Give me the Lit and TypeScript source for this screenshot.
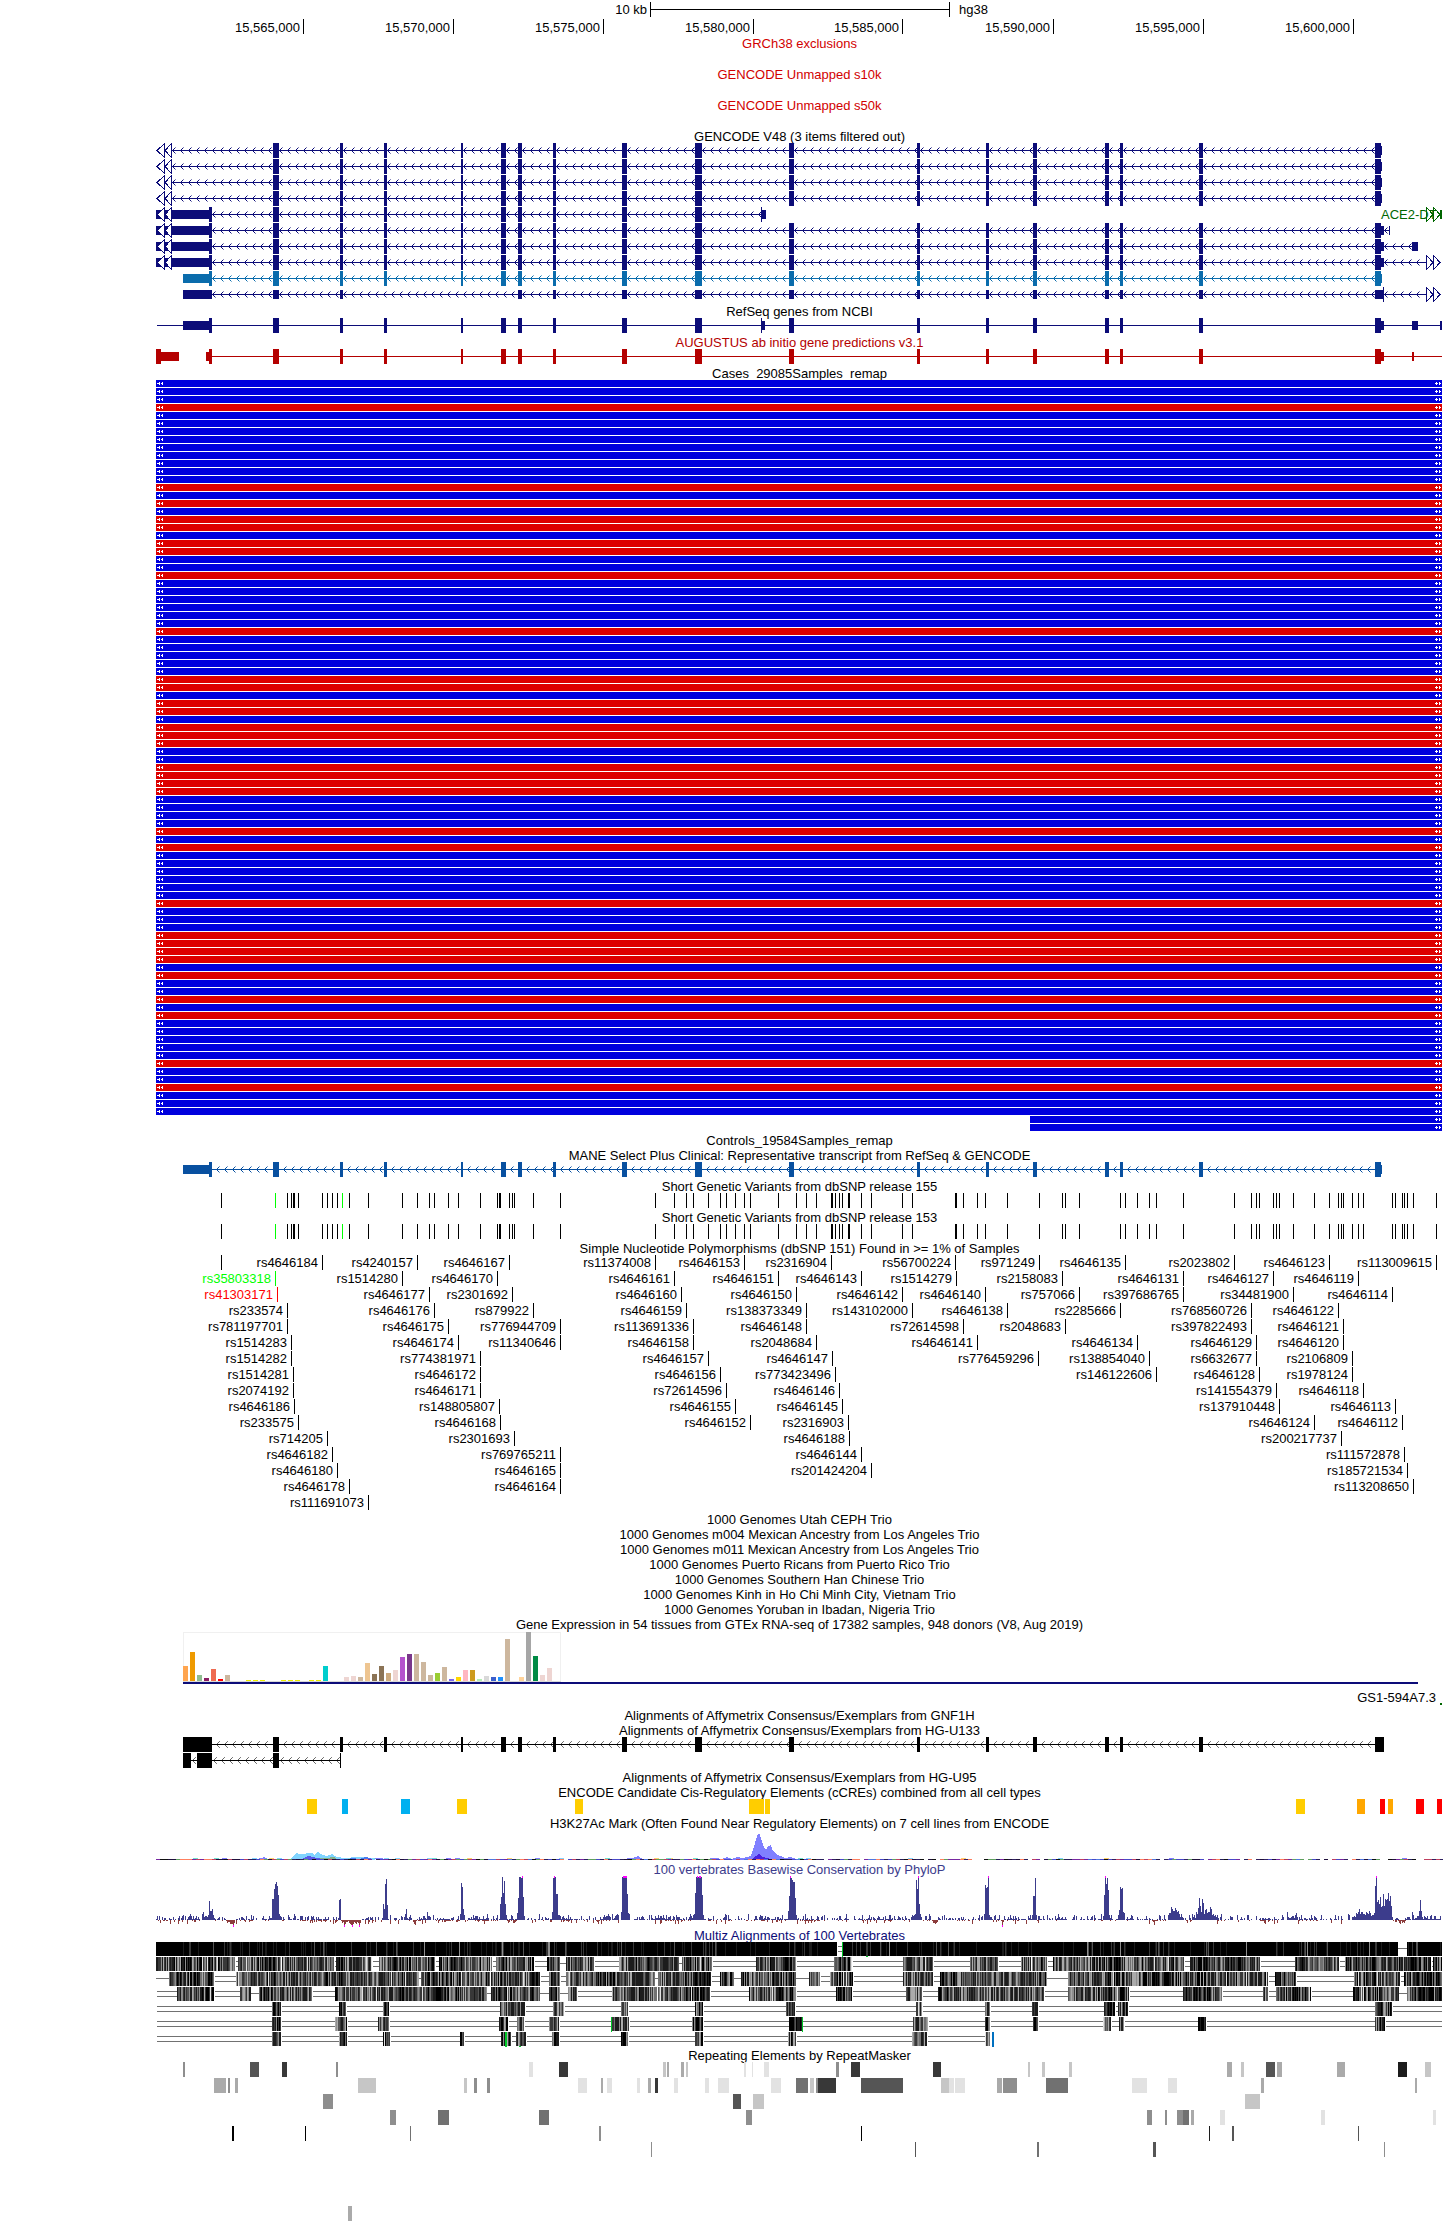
import { LitElement, html, svg, css, nothing } from "lit";
import { customElement, property } from "lit/decorators.js";

const W = 1287;
const UNIT = 2.4123;

/* Feature positions are kept in panel units; each half of the locus has its own origin. */
const L = (u: number) => Math.round(u / UNIT - 6);
const R = (u: number) => Math.round(u / UNIT + 637);

type Span = [number, number];
type Box = [number, number, string];

const spansL = (a: number[][]): Span[] => a.map(([s, e]) => [L(s), Math.max(L(e), L(s) + 1)]);
const spansR = (a: number[][]): Span[] => a.map(([s, e]) => [R(s), Math.max(R(e), R(s) + 1)]);

/* Repeatable pseudo-random source for the dense signal tracks. */
const noise = (i: number, seed: number) => {
  let h = Math.imul(i + 1, 374761393) ^ Math.imul(seed + 7, 668265263);
  h = Math.imul(h ^ (h >>> 13), 1274126177);
  h ^= h >>> 16;
  return (h >>> 0) / 4294967296;
};

const NAVY = "#0c0c78";
const TEAL = "#0a6cac";
const MANE = "#0850a0";
const MAROON = "#b40000";

const exonsLeft = spansL([
  [297, 311], [458, 466], [564, 572], [750, 755], [847, 859], [888, 897],
  [972, 979], [1139, 1151], [1315, 1332], [1541, 1554],
]);
const exonsRight = spansR([
  [299, 306], [466, 473], [579, 589], [753, 762], [789, 796], [979, 989],
]);
const START: Span = [L(142), L(150)];
const FINAL: Span = [R(1404), R(1418)];
const body = [...exonsLeft, ...exonsRight];

interface Gene {
  color: string;
  thick: Span[];
  thin: Span[];
  from?: number;
  to?: number;
  gap?: Span;
  arrows?: number;
  arrowTone?: number;
  headLeft?: boolean;
  headRight?: boolean;
}

const rect = (s: number, e: number, y: number, h: number) => `M${s} ${y}h${e - s}v${h}h${s - e}z`;

const chevrons = (g: Gene, top: number) => {
  const solid: string[] = [];
  const soft: string[] = [];
  if (g.arrows === undefined) return { solid: "", soft: "" };
  const all = [...g.thick, ...g.thin].sort((a, b) => a[0] - b[0]);
  let pos = g.from ?? all[0][0];
  if (g.headLeft && all[0][0] > 20) pos = 16;
  const stops: Span[] = [...all, [g.to ?? all[all.length - 1][1], W]];
  for (const [s, e] of stops) {
    for (let x = pos + g.arrows; x + 2 < s; x += 8) {
      solid.push(rect(x + 1, x + 2, top + 6, 3), rect(x + 2, x + 3, top + 5, 1), rect(x + 2, x + 3, top + 9, 1));
      soft.push(rect(x + 3, x + 4, top + 4, 1), rect(x + 3, x + 4, top + 10, 1));
    }
    pos = Math.max(pos, e);
  }
  return { solid: solid.join(""), soft: soft.join("") };
};

const drawGene = (g: Gene, row: number) => {
  const top = row * 16;
  const ends = [...g.thick, ...g.thin];
  const from = g.from ?? Math.min(...ends.map((s) => s[0]));
  const to = g.to ?? Math.max(...ends.map((s) => s[1]));
  const line = g.gap
    ? rect(from, g.gap[0], top + 7, 1) + rect(g.gap[1], to, top + 7, 1)
    : rect(from, to, top + 7, 1);
  const c = chevrons(g, top);
  const d = line + g.thick.map(([s, e]) => rect(s, e, top, 15)).join("") + g.thin.map(([s, e]) => rect(s, e, top + 3, 9)).join("");
  const heads: unknown[] = [];
  const tri = (tip: number, base: number) =>
    svg`<path d="M${tip} ${top + 7.5}L${base + 0.5} ${top + 0.5}V${top + 14.5}Z" fill="#fff" stroke=${g.color}></path>`;
  if (g.headLeft) heads.push(tri(1, 8), tri(9, 15));
  if (g.headRight) heads.push(tri(R(1528) + 7, R(1528)), tri(R(1545) + 7, R(1545)));
  return svg`<g fill=${g.color}><path d=${d}></path><path d=${c.solid} opacity=${g.arrowTone ?? 1}></path><path d=${c.soft} opacity="0.5"></path>${heads}</g>`;
};

const tail: Span = [FINAL[1], R(1421)];
const longTail: Span = [FINAL[1], R(1426)];
const full = (extra: Partial<Gene>): Gene => ({
  color: NAVY, thick: [...body, FINAL], thin: [tail], from: 2, arrows: 0, headLeft: true, ...extra,
});
const withUtr = (extra: Partial<Gene>): Gene =>
  full({ from: 0, thick: [START, ...body, FINAL], thin: [[0, START[0]], longTail], ...extra });

const gencode: Gene[] = [
  full({}), full({}), full({}), full({}),
  withUtr({ thick: [START, ...exonsLeft.slice(0, 9), [L(1474), L(1474) + 1]], thin: [[0, START[0]], [L(1474), L(1486)]] }),
  withUtr({ to: R(1440), thin: [[0, START[0]], longTail, [R(1438), R(1438) + 1]] }),
  withUtr({ thin: [[0, START[0]], longTail, [R(1493), R(1508)]] }),
  withUtr({ to: R(1528), headRight: true }),
  withUtr({ color: TEAL, from: L(80), thin: [[L(80), START[0]], tail], headLeft: false }),
  {
    color: NAVY, arrows: 0, from: L(80), to: R(1528), headRight: true,
    thick: [[R(1424), R(1424) + 1]],
    thin: [[L(80), L(150)], ...body.filter((_, i) => i < 2 || i > 4), [FINAL[0], R(1424)]],
  },
];

const aceDt: Gene = { color: "#006600", thick: [], thin: [[R(1561), R(1566)]], headRight: true };

const refseq: Gene[] = [{
  color: NAVY, from: L(17), to: R(1566),
  thick: [START, ...body, FINAL, [L(1474), L(1474) + 1]],
  thin: [[L(80), START[0]], [L(1474), L(1484)], longTail, [R(1493), R(1508)], [R(1561), R(1566)]],
}];

const augustus: Gene[] = [{
  color: MAROON, from: 0, to: R(1566), gap: [L(70), L(135)],
  thick: [[0, L(27)], START, ...body, FINAL],
  thin: [[0, L(70)], [L(135), START[0]], longTail, [R(1494), R(1497)]],
}];

const mane: Gene[] = [{
  color: MANE, arrows: 4,
  thick: [START, ...body, FINAL], thin: [[L(80), START[0]], tail],
}];

const affy: Gene[] = [
  { color: "#000", arrows: 4, arrowTone: 0.6, thin: [], thick: [[L(80), L(150)], ...body, [R(1404), R(1426)]] },
  { color: "#000", arrows: 1, arrowTone: 0.6, thin: [], thick: [[L(80), L(99)], [L(113), L(150)], exonsLeft[0], [L(458), L(458) + 1]] },
];

/* Case samples: 94 rows, minus-effect rows are red. */
const SAMPLE_ROWS = 94;
const redRows = new Set([
  3, 13, 15, 17, 18, 20, 21, 24, 31, 37, 38, 40, 41, 43, 44, 45, 48, 49, 50, 51,
  56, 58, 65, 69, 70, 71, 72, 74, 77, 79, 85, 88,
]);

const snpTicks = [
  ...[172, 331, 341, 344, 348, 356, 416, 426, 440, 452, 481, 527, 609, 645, 672, 686, 720, 742, 795,
    838, 841, 845, 865, 874, 879, 925, 990, 1219, 1263, 1294, 1311, 1345, 1376, 1390, 1410, 1434, 1448, 1514].map(L),
  ...[8, 32, 56, 91, 93, 102, 112, 117, 132, 136, 164, 189, 262, 288, 390, 392, 411, 445, 464, 517, 594,
    648, 655, 689, 790, 802, 831, 858, 875, 942, 1065, 1104, 1116, 1118, 1123, 1159, 1164, 1173, 1207, 1258,
    1294, 1314, 1323, 1326, 1349, 1364, 1374, 1444, 1451, 1470, 1475, 1480, 1495, 1552].map(R),
];
const codingTicks = [302, 462].map(L);

const snpRows: [string, string][] = [
  [":172 4646184:416 4240157:645 4646167:865 11374008:1219 4646153:1434", "2316904:91 56700224:390 971249:594 4646135:802 2023802:1065 4646123:1294 113009615:1552"],
  ["35803318:302:#00ff00 1514280:609 4646170:838 4646161:1263 4646151:1514", "4646143:165 1514279:392 2158083:648 4646131:942 4646127:1159 4646119:1364"],
  ["41303171:307:#ff0000 4646177:672 2301692:874 4646160:1280 4646150:1559", "4646142:262 4646140:464 757066:689 397686765:942 34481900:1207 4646114:1444"],
  ["233574:331 4646176:686 879922:925 4646159:1294", "138373349:32 143102000:288 4646138:517 2285666:790 768560726:1104 4646122:1314"],
  ["781197701:331 4646175:720 776944709:988 113691336:1311", "4646148:32 72614598:411 2048683:655 397822493:1104 4646121:1326"],
  ["1514283:341 4646174:742 11340646:988 4646158:1311", "2048684:56 4646141:445 4646134:831 4646129:1116 4646120:1326"],
  ["1514282:341 774381971:795 4646157:1345", "4646147:93 776459296:590 138854040:858 6632677:1118 2106809:1349"],
  ["1514281:344 4646172:795 4646156:1376", "773423496:102 146122606:875 4646128:1123 1978124:1349"],
  ["2074192:344 4646171:795 72614596:1390", "4646146:112 141554379:1164 4646118:1374"],
  ["4646186:348 148805807:841 4646155:1410", "4646145:117 137910448:1173 4646113:1451"],
  ["233575:356 4646168:845 4646152:1448", "2316903:132 4646124:1258 4646112:1470"],
  ["714205:426 2301693:879", "4646188:136 200217737:1323"],
  ["4646182:440 769765211:988", "4646144:163 111572878:1475"],
  ["4646180:452 4646165:990", "201424204:189 185721534:1480"],
  ["4646178:481 4646164:990", "113208650:1495"],
  ["111691073:527", ""],
];
const parseSnps = (text: string, at: (u: number) => number) =>
  text.split(" ").filter(Boolean).map((t) => {
    const [id, u, color] = t.split(":");
    return { label: id ? `rs${id}` : "", x: at(Number(u)), color: color ?? "#000" };
  });

const TAN = "#cdb79e";
const PINK = "#eed5d2";
/* GTEx tissues: slot, bar height, colour. */
const tissues: [number, number, string][] = [
  [0, 15, "#ffa54f"], [1, 29, "#ee9a00"], [2, 6, "#8fbc8f"], [3, 3, "#8b1c62"], [4, 12, "#ee6a50"],
  [5, 2, "#ff0000"], [6, 6, TAN], [9, 1, "#eeee00"], [10, 1, "#eeee00"], [11, 1, "#eeee00"],
  [14, 1, "#eeee00"], [15, 1, "#eeee00"], [16, 1, "#eeee00"], [18, 1, "#eeee00"], [19, 1, "#eeee00"],
  [20, 15, "#00cdcd"], [23, 4, PINK], [24, 5, PINK], [25, 4, TAN], [26, 18, "#eec591"],
  [27, 7, "#8b7355"], [28, 15, "#8b7355"], [29, 8, "#cdaa7d"], [30, 11, PINK], [31, 24, "#b452cd"],
  [32, 27, "#7a378b"], [33, 27, TAN], [34, 19, TAN], [35, 6, TAN], [36, 8, "#9acd32"],
  [37, 14, TAN], [38, 2, "#7a67ee"], [39, 4, "#ffd700"], [40, 11, "#ffb6c1"], [41, 11, "#cd9b1d"],
  [42, 2, "#b4eeb4"], [43, 5, "#d9d9d9"], [44, 4, "#3a5fcd"], [45, 4, "#1e90ff"], [46, 42, TAN],
  [48, 4, "#ffd39b"], [49, 49, "#a6a6a6"], [50, 25, "#008b45"], [51, 6, PINK], [52, 13, PINK],
];

const ENH = "#ffcd00", CTCF = "#00b0f0", PROX = "#ffa700", PROM = "#ff0000";
const ccres: Box[] = [
  [L(379), L(403), ENH], [L(463), L(478), CTCF], [L(605), L(627), CTCF], [L(741), L(765), ENH],
  [L(1025), L(1045), ENH], [L(1445), L(1481), ENH], [L(1484), L(1496), ENH],
  [R(1213), R(1235), ENH], [R(1361), R(1380), PROX], [R(1416), R(1428), PROM],
  [R(1435), R(1447), PROX], [R(1503), R(1522), PROM], [R(1554), R(1566), PROM],
];

/* H3K27Ac layers as position/height pairs. */
const area = (pts: number[][], at: (u: number) => number) =>
  `M${at(pts[0][0])} 30` + pts.map(([u, h]) => `L${at(u)} ${30 - h}`).join("") + `L${at(pts[pts.length - 1][0])} 30Z`;
const k27: [string, string][] = [
  ["#80d4ff", area([[338, 1], [346, 4], [352, 7], [362, 6], [390, 7], [396, 5], [401, 7], [406, 8], [412, 6], [425, 4], [440, 6], [450, 3], [470, 2], [500, 3], [535, 2], [542, 1]], L)],
  ["#5a5ae6", area([[365, 1], [372, 2], [382, 4], [392, 3], [400, 2], [425, 2], [430, 1]], L)],
  ["#7fb08a", area([[405, 1], [412, 2], [425, 2], [445, 3], [452, 1]], L)],
  ["#4878ee", area([[475, 1], [490, 2], [505, 1], [520, 3], [535, 1]], L)],
  ["#8080ff", area([[258, 1], [268, 2], [275, 3], [284, 1]], L)],
  ["#8080ff", area([[1146, 1], [1155, 2], [1165, 2], [1176, 4], [1185, 2], [1190, 1]], L)],
  ["#8080ff", area([[1340, 1], [1365, 2], [1380, 1], [1393, 3], [1402, 1], [1415, 3], [1430, 2], [1450, 4], [1458, 13], [1464, 24], [1468, 27], [1474, 22], [1480, 12], [1485, 10], [1491, 14], [1497, 15], [1504, 9], [1512, 5], [1522, 4], [1532, 2], [1545, 3], [1560, 1]], L)],
  ["#4a20e0", area([[1452, 1], [1462, 4], [1468, 6], [1475, 4], [1486, 2], [1500, 1]], L)],
];
const baseTones = ["#20103c", "#302060", "#101010", "#4848c8", "#c04060", "#60a060", "#7828a0", "#28205c", "#ff8060", "#5078e0"];
const bumpTones = ["#8080ff", "#ffd070", "#70e0d0", "#80d4ff"];
const k27Line = Array.from({ length: Math.ceil(W / 4) }, (_, i) => i)
  .filter((i) => noise(i, 3) > (i > 160 ? 0.12 : 0.03))
  .map((i) => ({ x: i * 4, c: baseTones[Math.floor(noise(i, 4) * baseTones.length)] }));
const k27Bumps = Array.from({ length: 40 }, (_, i) => ({
  x: Math.floor(noise(i, 5) * (i < 28 ? 620 : W)),
  c: bumpTones[i % 4],
}));

/* PhyloP peaks: left edge followed by one height per pixel column; 44 is the clipped maximum. */
const peaks: [number, number[]][] = [
  [46, [6, 8, 3, 4, 4, 3, 5, 19, 9, 9, 11, 5]],
  [114, [2, 2, 21, 21, 31, 36, 38, 34, 25, 6, 4, 3]],
  [182, [2, 20, 21, 31, 19, 9, 2]],
  [226, [2, 16, 11, 36, 41, 15, 1]],
  [248, [3, 6, 11, 2]],
  [271, [8, 4, 4]],
  [304, [6, 37, 33, 11, 5]],
  [344, [16, 23, 43, 27, 39, 16, 5]],
  [361, [7, 22, 43, 43, 42, 44, 23, 4]],
  [396, [8, 42, 44, 43, 26, 26, 5]],
  [465, [8, 43, 44, 44, 44, 44, 26, 7]],
  [538, [6, 27, 43, 44, 43, 44, 44, 43, 25, 5]],
  [632, [9, 24, 44, 42, 40, 38, 38, 22, 5]],
  [755, [3, 5, 4, 5, 6, 40, 31, 44, 16, 6, 3]],
  [828, [6, 35, 32, 33, 44, 5, 3]],
  [876, [5, 24, 24, 42, 5]],
  [947, [4, 25, 44, 36, 42, 30, 5]],
  [962, [5, 10, 33, 31, 32, 8, 7]],
  [1012, [5, 7, 7, 13, 11, 9, 9, 12, 10, 8, 9, 6, 3, 6]],
  [1036, [6, 3, 5, 2, 8, 6, 12, 22, 14, 8, 21, 17, 6, 10, 11, 7, 8, 8, 13, 11, 5, 6, 4, 5]],
  [1131, [8, 3, 2, 2, 3, 4, 4, 2, 5, 7, 3]],
  [1198, [4, 3, 7, 6, 8, 11, 6, 8, 8, 6, 6, 5, 8, 7, 6, 9, 7, 4, 5]],
  [1218, [7, 34, 44, 18, 20, 16, 23, 13, 14, 26, 14, 21, 20, 21, 27, 19, 24, 14, 3]],
  [1256, [8, 5, 1, 2, 2, 4, 4, 9, 20, 9, 3, 1]],
];
const dips: [number, number[]][] = [
  [70, [1, 3, 2, 2, 4, 4, 4, 7, 3]],
  [185, [1, 3, 2, 7, 4, 2, 2, 1, 3, 4, 5, 7, 4, 2, 3, 4, 2, 3, 7, 3]],
  [257, [2, 4, 5, 1]],
  [440, [1, 2, 4, 1]],
  [776, [1, 3, 3, 4, 3, 2]],
  [845, [1, 7, 2]],
  [997, [2, 5, 1]],
  [1243, [3, 4, 1, 3, 2, 3]],
];
const phylop = (() => {
  const up = new Array<number>(W).fill(0);
  const down = new Array<number>(W).fill(0);
  for (let x = 0; x < 1286; x++) {
    const dense = x < 300 ? 0.62 : noise(Math.floor(x / 26), 11) * 0.5 + 0.4;
    if (noise(x, 12) < dense) up[x] = 1 + Math.floor(noise(x, 13) ** 2 * 5.4);
    const sink = noise(Math.floor(x / 16), 14);
    if (noise(x, 15) < sink * 0.55) down[x] = 1 + Math.floor(noise(x, 16) ** 3 * 4);
  }
  for (const [s, hs] of peaks) hs.forEach((h, i) => { up[s + i] = h; down[s + i] = 0; });
  for (const [s, hs] of dips) hs.forEach((h, i) => { down[s + i] = h; up[s + i] = 0; });
  let pos = "", neg = "", clip = "";
  for (let x = 0; x < W; x++) {
    if (up[x]) pos += rect(x, x + 1, 44 - up[x], up[x]);
    if (down[x]) neg += rect(x, x + 1, 44, down[x]);
    if (up[x] === 44) clip += rect(x, x + 1, 0, 2);
    if (down[x] === 7) clip += rect(x, x + 1, 49, 2);
  }
  return { pos, neg, clip };
})();

/* Multiz rows: aligned blocks, plus the blocks after which the gap is a single line. */
const multiz: { l: number[][]; r: number[][]; single: number[]; end?: number; start?: number }[] = [
  { l: [[14, 1559]], r: [[0, 106], [117, 1460], [1481, 1566]], single: [R(1460)] },
  {
    l: [[14, 204], [212, 316], [318, 444], [449, 536], [552, 688], [697, 825], [835, 926], [958, 990], [1004, 1071], [1131, 1275], [1283, 1356], [1462, 1559]],
    r: [[0, 8], [99, 142], [265, 338], [427, 495], [550, 573], [577, 613], [627, 943], [958, 1127], [1211, 1316], [1332, 1540], [1545, 1566]],
    single: [L(990), L(1275)],
  },
  {
    l: [[46, 155], [207, 262], [263, 649], [654, 819], [822, 941], [963, 988], [1004, 1219], [1225, 1353], [1375, 1408], [1426, 1559]],
    r: [[0, 8], [39, 64], [89, 144], [265, 338], [355, 613], [663, 1146], [1163, 1213], [1353, 1464], [1474, 1566]],
    single: [0, L(1408), R(8), R(613), L(649), L(1219)],
  },
  {
    l: [[65, 155], [217, 244], [263, 391], [446, 813], [823, 941], [963, 988], [1008, 1031], [1114, 1222], [1225, 1351], [1445, 1559]],
    r: [[0, 8], [104, 142], [273, 311], [350, 605], [663, 811], [941, 1034], [1134, 1146], [1165, 1250], [1352, 1463], [1481, 1566]],
    single: [L(244), L(813), L(941), L(988), R(1463)],
  },
  {
    l: [[294, 316], [456, 472], [562, 577], [844, 905], [972, 998], [1136, 1154], [1315, 1334], [1534, 1556]],
    r: [[0, 6], [297, 312], [463, 476], [577, 591], [750, 776], [784, 808], [1404, 1446]], single: [],
  },
  {
    l: [[294, 315], [446, 475], [550, 577], [842, 864], [885, 901], [963, 986], [1114, 1156], [1307, 1334], [1541, 1556]],
    r: [[0, 22], [289, 326], [463, 475], [579, 592], [748, 766], [786, 799], [977, 996], [1404, 1427]], single: [],
  },
  {
    l: [[294, 316], [456, 475], [562, 578], [748, 757], [847, 872], [883, 906], [970, 986], [1136, 1154], [1315, 1334], [1539, 1556]],
    r: [[0, 8], [287, 323], [463, 476]], single: [], end: R(478),
  },
];
const shades = ["#000", "#1c1c1c", "#383838", "#555", "#717171", "#8e8e8e", "#aaa", "#e2e2e2"];
const multizArt = (() => {
  const tones = shades.map(() => "");
  let links = "";
  multiz.forEach((row, r) => {
    const top = r * 15;
    const blocks = [...spansL(row.l), ...spansR(row.r)];
    let pos = 0;
    const end = row.end ?? 1286;
    for (const [s, e] of [...blocks, [end, end] as Span]) {
      if (s > pos + 1) {
        links += row.single.includes(pos)
          ? rect(pos, s, top + 6, 1)
          : rect(pos + 1, s, top + 4, 1) + rect(pos + 1, s, top + 9, 1);
      }
      for (let x = s; x < e; x++) {
        const n = noise(x, 40 + r);
        let t: number;
        if (r === 0) t = n < 0.84 ? 0 : n < 0.92 ? 1 : n < 0.97 ? 2 : n < 0.985 ? 3 : 5;
        else {
          const drift = noise(Math.floor(x / 17), 60 + (r < 4 ? 0 : r)) * 0.5;
          const v = n * n * 0.8 + drift * 0.5;
          t = n > 0.985 ? 7 : Math.min(6, Math.floor(v * 8));
        }
        tones[t] += rect(x, x + 1, top, 14);
      }
      pos = e;
    }
  });
  return { tones, links };
})();

const repeats: Record<number, [string, string]> = {
  0: ["80-84-5 241-263-3 318-330-2 449-454-5 914-924-8 987-1008-2 1238-1245-7 1247-1252-6 1281-1288-6 1293-1298-7 1433-1438-8 1452-1455-8 1481-1493-8",
    "104-111-5 140-162-2 338-357-2 567-572-7 601-608-7 666-673-7 1047-1059-6 1081-1088-7 1141-1163-3 1168-1180-6 1312-1332-6 1459-1481-1 1525-1539-7"],
  1: ["154-183-6 188-193-5 205-212-6 502-545-7 757-765-7 782-789-5 813-820-5 1032-1054-8 1088-1093-6 1102-1114-8 1175-1182-8 1201-1209-6 1218-1225-2 1264-1274-8 1339-1348-8 1370-1397-8 1498-1522-8",
    "7-36-4 41-51-7 55-60-5 60-104-2 164-265-3 357-376-7 376-388-8 391-415-8 492-504-6 507-540-5 610-663-4 818-854-8 905-926-8 1129-1136-6 1500-1505-6"],
  2: ["417-441-5 1406-1426-3 1455-1481-7", "1090-1127-7"],
  3: ["579-593-5 695-721-4 938-963-4 1438-1452-5", "854-866-5 897-902-5 926-941-5 941-955-4 960-967-6 1030-1042-8 1274-1283-8 1544-1551-8"],
  4: ["198-203-0 374-376-0 627-630-4 1083-1088-5", "164-166-0 1004-1006-1 1059-1064-3 1363-1365-3"],
  5: ["1209-1211-5", "294-297-3 589-593-4 868-876-3 1426-1428-5"],
  9: ["478-487-6", ""],
};
const repeatShades = ["#000", "#1c1c1c", "#383838", "#555", "#717171", "#8e8e8e", "#aaa", "#c6c6c6", "#e2e2e2"];

const canvas = (height: number, content: unknown) => html`
  <svg class="art" viewBox="0 0 ${W} ${height}" height=${height} preserveAspectRatio="none" aria-hidden="true">${content}</svg>`;
const before = (x: number) => `right:${((W - x) / W) * 100}%`;
const after = (x: number) => `left:${(x / W) * 100}%`;
const fill = (s: number, e: number, y: number, h: number, c: string) =>
  svg`<path d=${rect(s, Math.max(e, s + 1), y, h)} fill=${c}></path>`;

const base = css`
  :host { display: block; }
  * { box-sizing: border-box; }
  .art { display: block; width: 100%; shape-rendering: crispEdges; }
  .canvas { position: relative; }
  .label { position: absolute; line-height: 16px; white-space: nowrap; }
`;

@customElement("genome-track")
class GenomeTrack extends LitElement {
  static styles = [base, css`
    .title {
      margin: 0;
      font-size: 13px;
      font-weight: 400;
      line-height: 15px;
      padding-top: 1px;
      height: 15px;
      text-align: center;
      white-space: nowrap;
    }
    .red { color: #d20000; }
    .maroon { color: #b40000; }
    .slate { color: #3c3c8c; }
    .navy { color: #0c0c78; }
  `];
  @property() heading = "";
  @property() tone = "";
  render() {
    return html`<section><h2 class="title ${this.tone}">${this.heading}</h2><slot></slot></section>`;
  }
}

@customElement("app-root")
class AppRoot extends LitElement {
  static styles = [base, css`
    :host {
      background: #fff;
      color: #000;
      font-family: "Liberation Sans", Arial, Helvetica, sans-serif;
      font-size: 13px;
    }
    .browser { padding-left: 156px; overflow: hidden; }
    .scale { top: 2px; }
    .position { top: 20px; }
    .empty { height: 16px; }
    .lane { position: relative; height: 16px; }
    .mark { position: absolute; top: 0; width: 1px; height: 15px; }
    .gene-name { top: 64px; color: #006600; }
    .neighbor { top: 59px; }
  `];

  private ruler() {
    const ticks = [
      ...[[368, 15565], [730, 15570], [1092, 15575], [1454, 15580]].map(([u, v]) => [L(u), v]),
      ...[[264, 15585], [628, 15590], [990, 15595], [1352, 15600]].map(([u, v]) => [R(u), v]),
    ];
    const a = L(1205), b = R(377);
    const d = rect(a, b, 9, 1) + rect(a, a + 1, 2, 15) + rect(b, b + 1, 2, 15) +
      ticks.map(([x]) => rect(x, x + 1, 19, 15)).join("");
    return html`<div class="canvas">
      ${canvas(35, svg`<path d=${d}></path>`)}
      <span class="label scale" style=${before(a - 3)}>10 kb</span>
      <span class="label scale" style=${after(b + 10)}>hg38</span>
      ${ticks.map(([x, v]) => html`<span class="label position" style=${before(x - 3)}>${(v * 1000).toLocaleString("en-US")}</span>`)}
    </div>`;
  }

  private genes(list: Gene[]) {
    return canvas(list.length * 16, list.map(drawGene));
  }

  private samples() {
    const rows = Array.from({ length: SAMPLE_ROWS }, (_, i) => {
      const y = i * 8;
      const from = i < 92 ? 0 : R(572);
      const left = i < 92
        ? rect(1, 4, y + 3, 1) + rect(3, 4, y + 2, 3) + rect(5, 7, y + 3, 1) + rect(6, 7, y + 2, 3)
        : "";
      const right = rect(1279, 1282, y + 3, 1) + rect(1280, 1281, y + 2, 3) + rect(1283, 1285, y + 3, 1) + rect(1283, 1284, y + 2, 3);
      return svg`${fill(from, 1286, y, 7, redRows.has(i) ? "#dd0000" : "#0000dd")}<path d=${left + right} fill="#fff"></path>`;
    });
    return canvas(SAMPLE_ROWS * 8, rows);
  }

  private variants() {
    const d = (xs: number[]) => xs.map((x) => rect(x, x + 1, 0, 15)).join("");
    return canvas(16, svg`<path d=${d(snpTicks)}></path><path d=${d(codingTicks)} fill="#00ff00"></path>`);
  }

  private commonSnps() {
    return snpRows.map(([l, r]) => html`<div class="lane">
      ${[...parseSnps(l, L), ...parseSnps(r, R)].map((s) => html`
        <span class="mark" style="${after(s.x)};background:${s.color}"></span>
        ${s.label ? html`<span class="label" style="${before(s.x - 4)};color:${s.color}">${s.label}</span>` : nothing}`)}
    </div>`);
  }

  private expression() {
    const x0 = L(80), x1 = L(990);
    return html`<div class="canvas">
      ${canvas(76, svg`
        <path d="M${x0 + 0.5} 50.5V1.5H${x1 + 0.5}V50.5" fill="none" stroke="#f0f0f0"></path>
        ${fill(x0, x1 + 1, 50, 1, "#d9d9d9")}
        ${tissues.map(([i, h, c]) => fill(x0 + i * 7, x0 + i * 7 + 5, 50 - h, h, c))}
        ${fill(x0, R(1508), 51, 2, NAVY)}
        ${fill(R(1561), R(1566), 72, 2, "#006600")}`)}
      <span class="label neighbor" style=${before(R(1551))}>GS1-594A7.3</span>
    </div>`;
  }

  private acetylation() {
    return canvas(31, svg`
      ${k27Bumps.map((b) => fill(b.x, b.x + 5, 28, 1, b.c))}
      ${k27.map(([c, d]) => svg`<path d=${d} fill=${c}></path>`)}
      ${k27Line.map((s) => fill(s.x, s.x + 4, 29, 1, s.c))}`);
  }

  private conservation() {
    return canvas(51, svg`
      <path d=${phylop.pos} fill="#3c3c8c"></path>
      <path d=${phylop.neg} fill="#8c3c3c"></path>
      <path d=${phylop.clip} fill="#ff00ff"></path>`);
  }

  private alignments() {
    const green = rect(R(117), R(117) + 1, 0, 15) + rect(R(175), R(175) + 2, 14, 1) +
      rect(L(1112), L(1112) + 1, 75, 15) + rect(R(22), R(22) + 1, 75, 15) +
      rect(L(857), L(857) + 2, 90, 15) + rect(L(890), L(890) + 2, 104, 1);
    return canvas(105, svg`
      <path d=${multizArt.links} fill="#717171"></path>
      ${multizArt.tones.map((d, i) => svg`<path d=${d} fill=${shades[i]}></path>`)}
      <path d=${green} fill="#00c828"></path>
      ${fill(R(480), R(485), 90, 15, "#0070c0")}`);
  }

  private repeatMasker() {
    const boxes = (text: string, at: (u: number) => number, row: number) =>
      text.split(" ").filter(Boolean).map((t) => {
        const [s, e, tone] = t.split("-").map(Number);
        return fill(at(s), at(e), row * 16, 15, repeatShades[tone]);
      });
    return canvas(160, Object.entries(repeats).map(([row, [l, r]]) => [boxes(l, L, +row), boxes(r, R, +row)]));
  }

  render() {
    const track = (heading: string, content: unknown = nothing, tone = "") =>
      html`<genome-track heading=${heading} tone=${tone}>${content}</genome-track>`;
    const blank = html`<div class="empty"></div>`;
    return html`<main class="browser">
      ${this.ruler()}
      ${track("GRCh38 exclusions", blank, "red")}
      ${track("GENCODE Unmapped s10k", blank, "red")}
      ${track("GENCODE Unmapped s50k", blank, "red")}
      ${track("GENCODE V48 (3 items filtered out)", html`<div class="canvas">
        ${canvas(160, svg`${gencode.map(drawGene)}${drawGene(aceDt, 4)}`)}
        <span class="label gene-name" style=${after(R(1418))}>ACE2-DT</span>
      </div>`)}
      ${track("RefSeq genes from NCBI", this.genes(refseq))}
      ${track("AUGUSTUS ab initio gene predictions v3.1", this.genes(augustus), "maroon")}
      ${track("Cases_29085Samples_remap", this.samples())}
      ${track("Controls_19584Samples_remap")}
      ${track("MANE Select Plus Clinical: Representative transcript from RefSeq & GENCODE", this.genes(mane))}
      ${track("Short Genetic Variants from dbSNP release 155", this.variants())}
      ${track("Short Genetic Variants from dbSNP release 153", this.variants())}
      ${track("Simple Nucleotide Polymorphisms (dbSNP 151) Found in >= 1% of Samples", this.commonSnps())}
      ${["Utah CEPH Trio", "m004 Mexican Ancestry from Los Angeles Trio", "m011 Mexican Ancestry from Los Angeles Trio",
        "Puerto Ricans from Puerto Rico Trio", "Southern Han Chinese Trio", "Kinh in Ho Chi Minh City, Vietnam Trio",
        "Yoruban in Ibadan, Nigeria Trio"].map((t) => track(`1000 Genomes ${t}`))}
      ${track("Gene Expression in 54 tissues from GTEx RNA-seq of 17382 samples, 948 donors (V8, Aug 2019)", this.expression())}
      ${track("Alignments of Affymetrix Consensus/Exemplars from GNF1H")}
      ${track("Alignments of Affymetrix Consensus/Exemplars from HG-U133", this.genes(affy))}
      ${track("Alignments of Affymetrix Consensus/Exemplars from HG-U95")}
      ${track("ENCODE Candidate Cis-Regulatory Elements (cCREs) combined from all cell types",
        canvas(16, ccres.map(([s, e, c]) => fill(s, e, 0, 15, c))))}
      ${track("H3K27Ac Mark (Often Found Near Regulatory Elements) on 7 cell lines from ENCODE", this.acetylation())}
      ${track("100 vertebrates Basewise Conservation by PhyloP", this.conservation(), "slate")}
      ${track("Multiz Alignments of 100 Vertebrates", this.alignments(), "navy")}
      ${track("Repeating Elements by RepeatMasker", this.repeatMasker())}
    </main>`;
  }
}
